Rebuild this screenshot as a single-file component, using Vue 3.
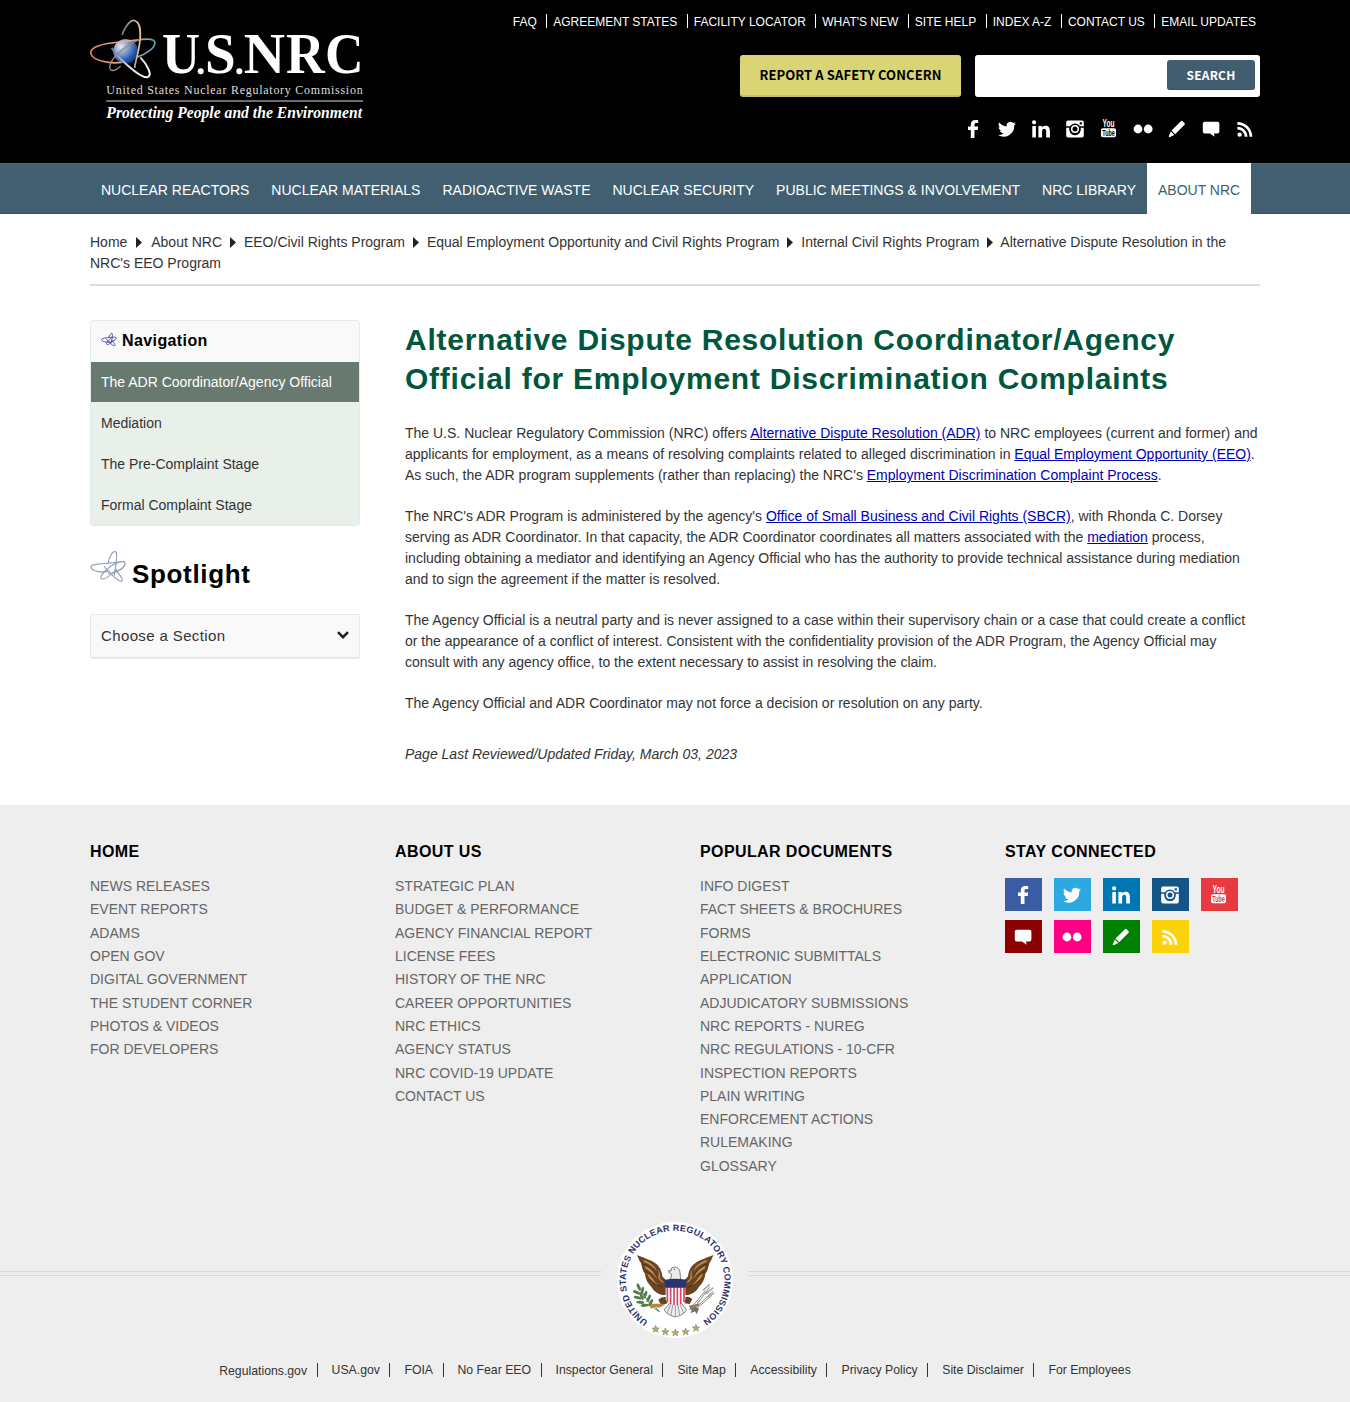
<script setup>
const topLinks = ['FAQ', 'AGREEMENT STATES', 'FACILITY LOCATOR', "WHAT'S NEW", 'SITE HELP', 'INDEX A-Z', 'CONTACT US', 'EMAIL UPDATES']
const mainNav = ['NUCLEAR REACTORS', 'NUCLEAR MATERIALS', 'RADIOACTIVE WASTE', 'NUCLEAR SECURITY', 'PUBLIC MEETINGS & INVOLVEMENT', 'NRC LIBRARY', 'ABOUT NRC']
const crumbs = ['Home', 'About NRC', 'EEO/Civil Rights Program', 'Equal Employment Opportunity and Civil Rights Program', 'Internal Civil Rights Program', "Alternative Dispute Resolution in the NRC's EEO Program"]
const sideLinks = ['The ADR Coordinator/Agency Official', 'Mediation', 'The Pre-Complaint Stage', 'Formal Complaint Stage']
const footerColumns = [
  { title: 'HOME', links: ['NEWS RELEASES', 'EVENT REPORTS', 'ADAMS', 'OPEN GOV', 'DIGITAL GOVERNMENT', 'THE STUDENT CORNER', 'PHOTOS & VIDEOS', 'FOR DEVELOPERS'] },
  { title: 'ABOUT US', links: ['STRATEGIC PLAN', 'BUDGET & PERFORMANCE', 'AGENCY FINANCIAL REPORT', 'LICENSE FEES', 'HISTORY OF THE NRC', 'CAREER OPPORTUNITIES', 'NRC ETHICS', 'AGENCY STATUS', 'NRC COVID-19 UPDATE', 'CONTACT US'] },
  { title: 'POPULAR DOCUMENTS', links: ['INFO DIGEST', 'FACT SHEETS & BROCHURES', 'FORMS', 'ELECTRONIC SUBMITTALS APPLICATION', 'ADJUDICATORY SUBMISSIONS', 'NRC REPORTS - NUREG', 'NRC REGULATIONS - 10-CFR', 'INSPECTION REPORTS', 'PLAIN WRITING', 'ENFORCEMENT ACTIONS', 'RULEMAKING', 'GLOSSARY'] },
]
const bottomLinks = ['Regulations.gov', 'USA.gov', 'FOIA', 'No Fear EEO', 'Inspector General', 'Site Map', 'Accessibility', 'Privacy Policy', 'Site Disclaimer', 'For Employees']

// Glyphs share a 20 x 20 box.
const icons = {
  facebook: 'M15.2 1h-2.7C9.4 1 7.8 2.7 7.8 5.5v2H5v3.4h2.8V19h3.7v-8.1h3.2l.5-3.4h-3.700V5.700c0-1.100.5-1.600 1.600-1.600h2.100z',
  twitter: 'M19 4.600c-.6.3-1.300.5-2.100.600.8-.500 1.300-1.200 1.600-2-.700.400-1.500.700-2.300.900a3.700 3.700 0 0 0-6.400 3.400C6.700 7.300 4 5.900 2.100 3.600c-1 1.700-.5 3.800 1.200 4.900-.6 0-1.200-.2-1.700-.5 0 1.800 1.200 3.300 3 3.700-.5.1-1.100.2-1.700.1.5 1.500 1.800 2.500 3.500 2.600A7.500 7.500 0 0 1 1 15.900a10.500 10.500 0 0 0 16.200-9.400c.7-.5 1.300-1.100 1.800-1.900z',
  linkedin: 'M1.300 7h3.600v11.500H1.300zM3.100 1.200a2.100 2.100 0 1 1 0 4.200 2.100 2.100 0 0 1 0-4.200zM7.400 7h3.500v1.600c.7-1.200 1.900-1.900 3.600-1.900 3.200 0 4.400 2 4.400 5.300v6.500h-3.700v-6c0-1.700-.5-2.700-1.900-2.700-1.500 0-2.200 1.100-2.200 2.800v5.900H7.400z',
  instagram: 'M3 1.500h14A1.800 1.800 0 0 1 18.800 3.300V7.300H14.800A5.600 5.600 0 0 0 5.200 7.300H1.200V3.300A1.800 1.800 0 0 1 3 1.500zM14.700 3.200v2.200h2.200V3.200zM1.200 8.800h3.100a5.900 5.900 0 1 0 11.400 0h3.100v8a1.800 1.800 0 0 1-1.800 1.800H3a1.800 1.800 0 0 1-1.800-1.800zM10 6.100a4 4 0 1 1 0 8 4 4 0 0 1 0-8zM10 7.600a2.500 2.500 0 1 0 0 5 2.500 2.500 0 0 0 0-5z',
  flickr: 'M5 5.600a4.400 4.400 0 1 1 0 8.800 4.400 4.400 0 0 1 0-8.800zM15.200 5.600a4.400 4.400 0 1 1 0 8.800 4.400 4.400 0 0 1 0-8.800z',
  pencil: 'M13.900 2.200q.8-.8 1.600 0l2 1.900q.8.8 0 1.600L8.200 15.200 4.500 11.600zM3.800 12.500l3.500 3.400L2.500 18.200l-.8-.8z',
  comment: 'M3.800 2.800h12.600q2 0 2 2v7.600q0 2-2 2h-3.400l.6 3.300-4.600-3.300H3.800q-2 0-2-2V4.800q0-2 2-2z',
  rss: 'M4.600 13.400a2.200 2.200 0 1 1 0 4.400 2.200 2.200 0 0 1 0-4.400zM2.400 7.800c5.600 0 10.100 4.400 10.100 10H9.700c0-4-3.300-7.200-7.300-7.200zM2.400 3c8.200 0 14.900 6.600 14.900 14.800h-2.700C14.600 11.100 9.200 5.800 2.400 5.800z',
}
const headerSocial = ['facebook', 'twitter', 'linkedin', 'instagram', 'youtube', 'flickr', 'pencil', 'comment', 'rss']
const footerSocial = ['facebook', 'twitter', 'linkedin', 'instagram', 'youtube', 'comment', 'flickr', 'pencil', 'rss']
const stars = [[289, 356], [318, 364], [348, 367], [379, 364], [410, 353]]
const leaves = [[238, 230, 70], [232, 246, 25], [235, 262, 15], [243, 276, 5], [256, 285, -5], [249, 241, 105], [258, 253, 110], [268, 264, 115], [274, 277, 120], [247, 258, 70]]
</script>

<template>
  <div class="page">
    <header class="masthead">
      <div class="wrap masthead-row">
        <svg class="logo" viewBox="30 21 840 330" aria-label="U.S. NRC">
          <defs>
            <radialGradient id="globe" cx=".3" cy=".3" r=".8">
              <stop offset="0" stop-color="#e4e9f4" /><stop offset=".4" stop-color="#7f9dd0" /><stop offset=".75" stop-color="#2458a8" /><stop offset="1" stop-color="#0b3478" />
            </radialGradient>
            <linearGradient id="orbitA" x1="0" x2="1"><stop offset="0" stop-color="#e07d60" /><stop offset=".55" stop-color="#f0b095" /><stop offset="1" stop-color="#4fa3b8" /></linearGradient>
            <linearGradient id="orbitB" x1="0" x2="1" y1="0" y2="1"><stop offset="0" stop-color="#5a7199" /><stop offset=".55" stop-color="#ddd" /><stop offset="1" stop-color="#fff" /></linearGradient>
            <linearGradient id="orbitC" x1="0" x2="1"><stop offset="0" stop-color="#6d7891" /><stop offset="1" stop-color="#f2c38c" /></linearGradient>
          </defs>
          <circle cx="137" cy="124" r="37" fill="url(#globe)" />
          <g fill="none" stroke-width="5">
            <path d="M125 157C88 162 40 152 33 132S68 100 120 96 219 79 224 96 196 133 172 141" stroke="url(#orbitA)" />
            <path d="M126 75C137 45 153 28 165 32 184 39 183 80 176 117S165 157 164 174" stroke="url(#orbitC)" />
            <path d="M180 88C145 101 99 137 91 162 83 188 104 186 122 168" stroke="#a78473" stroke-width="4" />
            <path d="M95 113C109 139 176 202 201 202 220 199 203 165 181 142" stroke="url(#orbitB)" stroke-width="6" />
          </g>
          <g class="logo-name">
            <text x="246" y="190" textLength="114" lengthAdjust="spacingAndGlyphs">U</text>
            <circle cx="362" cy="184" r="9" />
            <text x="375" y="190" textLength="92" lengthAdjust="spacingAndGlyphs">S</text>
            <circle cx="478" cy="184" r="9" />
            <text x="491" y="190" textLength="124" lengthAdjust="spacingAndGlyphs">N</text>
            <text x="618" y="190" textLength="116" lengthAdjust="spacingAndGlyphs">R</text>
            <text x="735" y="190" textLength="116" lengthAdjust="spacingAndGlyphs">C</text>
          </g>
          <text class="logo-agency" x="79" y="251" textLength="769">United States Nuclear Regulatory Commission</text>
          <path d="M79 273H849" stroke="#ddd" stroke-width="3" />
          <text class="logo-motto" x="79" y="325" textLength="767" lengthAdjust="spacingAndGlyphs">Protecting People and the Environment</text>
        </svg>
        <div class="tools">
          <ul class="top-links"><li v-for="l in topLinks" :key="l">{{ l }}</li></ul>
          <div class="actions">
            <a class="report">REPORT A SAFETY CONCERN</a>
            <div class="search"><button>SEARCH</button></div>
          </div>
          <ul class="social">
            <li v-for="s in headerSocial" :key="s">
              <svg viewBox="0 0 20 20" class="glyph">
                <template v-if="s === 'youtube'">
                  <text x="9.500" y="8.300" class="yt" textLength="12" lengthAdjust="spacingAndGlyphs">You</text>
                  <rect x="2" y="9.300" width="15" height="9" rx="1.800" />
                  <text x="9.500" y="17.100" class="yt tube" textLength="12.500" lengthAdjust="spacingAndGlyphs">Tube</text>
                </template>
                <path v-else :d="icons[s]" fill-rule="evenodd" />
              </svg>
            </li>
          </ul>
        </div>
      </div>
    </header>

    <nav class="main-nav">
      <ul class="wrap"><li v-for="(l, i) in mainNav" :key="l" :class="{ current: i === 6 }">{{ l }}</li></ul>
    </nav>

    <div class="wrap">
      <div class="crumbs"><template v-for="(c, i) in crumbs" :key="c"><svg v-if="i" class="arrow" :class="'arrow-' + i" viewBox="0 0 5 9"><path d="M0 0L5 4.500L0 9z" /></svg>{{ c + ' ' }}</template></div>

      <div class="columns">
        <aside>
          <div class="side-nav">
            <h2>
              <svg class="atom small" viewBox="0 0 37 34"><g fill="none" stroke="#514ba0" stroke-width="2.200"><path d="M18 23C9 24 1 20 1 17S13 13 22 12 36 11 35 15 24 25 15 22" /><path d="M18 13C20 5 25 0 26 4S26 16 23 26" /><path d="M26 12C18 18 11 25 13 28S22 26 29 18" /><path d="M12 15C18 23 30 35 32 31S28 23 24 19" /></g></svg>
              Navigation
            </h2>
            <ul><li v-for="(l, i) in sideLinks" :key="l" :class="{ current: i === 0 }">{{ l }}</li></ul>
          </div>
          <h2 class="spotlight">
            <svg class="atom" viewBox="0 0 37 34"><g fill="none" stroke="#8d9ab5" stroke-width="1.100"><path d="M20 21C10 24 1 20 1 17S10 14 20 13 36 10 35 14 28 22 18 24" /><path d="M18 14C19 5 24 0 26 2S26 15 24 26" /><path d="M29 12C20 15 10 25 11 28S20 27 27 19" /><path d="M14 16C20 25 31 33 32 31S29 23 25 20" /></g></svg>
            <span>Spotlight</span>
          </h2>
          <div class="select">
            <span>Choose a Section</span>
            <svg viewBox="0 0 12 8"><path d="M1 1.200L6 6.200L11 1.200" fill="none" stroke="#222" stroke-width="2.600" /></svg>
          </div>
        </aside>

        <main>
          <h1>Alternative Dispute Resolution Coordinator/Agency Official for Employment Discrimination Complaints</h1>
          <p>The U.S. Nuclear Regulatory Commission (NRC) offers <a href="#">Alternative Dispute Resolution (ADR)</a> to NRC employees (current and former) and applicants for employment, as a means of resolving complaints related to alleged discrimination in <a href="#">Equal Employment Opportunity (EEO)</a>. As such, the ADR program supplements (rather than replacing) the NRC's <a href="#">Employment Discrimination Complaint Process</a>.</p>
          <p>The NRC's ADR Program is administered by the agency's <a href="#">Office of Small Business and Civil Rights (SBCR)</a>, with Rhonda C. Dorsey serving as ADR Coordinator. In that capacity, the ADR Coordinator coordinates all matters associated with the <a href="#">mediation</a> process, including obtaining a mediator and identifying an Agency Official who has the authority to provide technical assistance during mediation and to sign the agreement if the matter is resolved.</p>
          <p>The Agency Official is a neutral party and is never assigned to a case within their supervisory chain or a case that could create a conflict or the appearance of a conflict of interest. Consistent with the confidentiality provision of the ADR Program, the Agency Official may consult with any agency office, to the extent necessary to assist in resolving the claim.</p>
          <p>The Agency Official and ADR Coordinator may not force a decision or resolution on any party.</p>
          <p class="updated">Page Last Reviewed/Updated Friday, March 03, 2023</p>
        </main>
      </div>
    </div>

    <footer>
      <div class="wrap footer-columns">
        <section v-for="c in footerColumns" :key="c.title">
          <h3>{{ c.title }}</h3>
          <ul><li v-for="l in c.links" :key="l">{{ l }}</li></ul>
        </section>
        <section>
          <h3>STAY CONNECTED</h3>
          <ul class="tiles">
            <li v-for="s in footerSocial" :key="s" :class="s">
              <svg viewBox="0 0 20 20" class="glyph">
                <template v-if="s === 'youtube'">
                  <text x="9.500" y="8.300" class="yt" textLength="12" lengthAdjust="spacingAndGlyphs">You</text>
                  <rect x="2" y="9.300" width="15" height="9" rx="1.800" />
                  <text x="9.500" y="17.100" class="yt tube" textLength="12.500" lengthAdjust="spacingAndGlyphs">Tube</text>
                </template>
                <path v-else :d="icons[s]" fill-rule="evenodd" />
              </svg>
            </li>
          </ul>
        </section>
      </div>

      <div class="seal-row">
        <i class="rule"></i>
        <svg class="seal" viewBox="152 29 390 360">
          <defs>
            <path id="ring" d="M266 333A148 148 0 1 1 430 332" />
            <g id="wing">
              <path fill="#6b4425" d="M233 134C246 140 268 146 286 157 302 168 307 182 309 198 314 206 321 209 327 214L323 253C305 257 285 247 276 229 263 217 258 202 257 190 249 181 247 167 245 158 239 151 236 142 233 134z" />
              <path fill="#bd8b4a" d="M252 148C271 155 289 165 293 184 286 172 271 162 254 155zM257 166C276 174 287 187 294 206 284 193 273 183 259 175zM264 188C278 197 287 211 298 227 284 218 272 208 266 196zM297 175Q303 190 302 204L315 219Q304 216 297 204 299 190 297 175z" />
              <path fill="none" stroke="#3b2410" stroke-width="2" d="M248 160Q276 168 292 198M258 181Q277 193 291 218M267 205Q284 223 310 231" />
            </g>
          </defs>
          <circle cx="347" cy="209" r="174" fill="#fff" />
          <text class="seal-text"><textPath href="#ring" textLength="755" lengthAdjust="spacing">UNITED STATES NUCLEAR REGULATORY COMMISSION</textPath></text>
          <use href="#wing" />
          <use href="#wing" transform="matrix(-1 0 0 1 695 0)" />
          <path d="M332 277L314 299 324 310 336 316 348 320 361 316 372 310 382 299 365 277z" fill="#eee" stroke="#555" stroke-width="2" />
          <path d="M335 280L323 309M341 280L335 315M348 280V319M355 280L361 315M362 280L373 309" stroke="#777" stroke-width="2" />
          <path d="M297 268Q305 258 320 260L324 278Q312 286 303 280zM377 261Q390 256 399 267L391 281 376 279z" fill="#654321" />
          <path d="M332 213L337 192Q328 188 328 181L336 180Q334 171 346 170 361 171 362 187L364 213z" fill="#eee" stroke="#777" stroke-width="3" />
          <path d="M328 180q-4 3-2 8l5-4 7-1" fill="#b8a06a" /><circle cx="345" cy="177" r="2" fill="#333" />
          <path d="M319 229H378V267Q375 280 348 285 322 280 319 267z" fill="#fff" />
          <path d="M324 230V275M334 230V281M344 230V284M354 230V284M364 230V281M374 230V275" stroke="#d4456a" stroke-width="5" />
          <path d="M315 209Q348 202 382 209L379 232H318z" fill="#29336e" />
          <path d="M239 227Q253 259 280 289L298 304" fill="none" stroke="#5c7449" stroke-width="3" />
          <ellipse v-for="(l, i) in leaves" :key="i" rx="12" ry="4.500" fill="#557d50" :transform="`translate(${l[0]} ${l[1]}) rotate(${l[2]})`" />
          <path d="M271 287l8-7h30l6 5-16 7-15-2-9 5z" fill="#bd823d" />
          <path d="M289 292l12 12" stroke="#5878a5" stroke-width="3" />
          <path d="M396 304L451 230M398 303L461 243M402 303L457 256M390 299L438 241" stroke="#8b8983" stroke-width="3" />
          <path d="M431 240l20-18M437 252l25-20M442 261l23-13" stroke="#aaa" stroke-width="5" />
          <path d="M391 293l18-3 10 5-7 17-5-9-14 6 5-9z" fill="#66727a" /><path d="M388 286l34-7-5 8-24 7z" fill="#a47945" />
          <path v-for="(s, i) in stars" :key="'s' + i" d="M0-11L3-3 11-3 5 2 7 10 0 5-7 10-5 2-11-3-3-3z" fill="#b3ac78" stroke="#77764b" stroke-width="1.500" :transform="`translate(${s[0]} ${s[1]})`" />
        </svg>
        <i class="rule"></i>
      </div>
      <ul class="bottom-links"><li v-for="l in bottomLinks" :key="l">{{ l }}</li></ul>
    </footer>
  </div>
</template>

<style>
body { margin: 0; background: #fff; }
</style>

<style scoped>
.page { font: 14px/21px "Liberation Sans", Arial, sans-serif; color: #333; }
.page * { box-sizing: border-box; }
ul { list-style: none; margin: 0; padding: 0; }
h1, h2, h3, p { margin: 0; }
.wrap { width: 1170px; margin: 0 auto; }
.masthead { height: 163px; background: #000; color: #fff; }
.masthead-row { display: flex; justify-content: space-between; }
.logo { width: 280px; height: 110px; margin-top: 17px; }
.logo-name { fill: #fff; font: bold 168px "Liberation Serif", serif; }
.logo-agency { fill: #ddd; font: 36px "Liberation Serif", serif; }
.logo-motto { fill: #fff; font: italic bold 49px "Liberation Serif", serif; }
.tools { display: flex; flex-direction: column; align-items: flex-end; }
.top-links { display: flex; height: 55px; padding: 14px 4px 0 0; font-size: 12px; line-height: 16px; }
.top-links li + li { position: relative; margin-left: 16.500px; }
.top-links li + li::before { content: ""; position: absolute; left: -7px; top: 0; width: 1px; height: 14px; background: #fff; }
.actions { display: flex; gap: 14px; }
.report { width: 221px; height: 42px; border-radius: 3px; background: #d9d474; border-bottom: 2px solid #c9c161; color: #000; font: bold 13px/40px "Noto Sans CJK JP", sans-serif; letter-spacing: .1px; text-align: center; white-space: nowrap; }
.search { width: 285px; height: 42px; padding: 5px; border-radius: 3px; background: #fff; text-align: right; display: flex; justify-content: flex-end; }
.search button { width: 88px; height: 30px; padding: 0; border: 0; border-bottom: 1px solid #35505f; border-radius: 3px; background: #415e70; color: #fff; font: bold 12px/28px "Noto Sans CJK JP", sans-serif; letter-spacing: .2px; }
.social { display: flex; margin: 22px -2px 0 0; }
.social li { width: 34px; height: 20px; display: flex; justify-content: center; --under: #000; }
.glyph { width: 20px; height: 20px; fill: #fff; overflow: visible; }
.yt { font: bold 11px "Liberation Sans Narrow", "Liberation Sans", sans-serif; text-anchor: middle; }
.tube { fill: var(--under); font-size: 9.500px; }
.main-nav { height: 51px; background: #415f70; border-top: 1px solid #4b6878; border-bottom: 1px solid #355566; }
.main-nav ul { display: flex; }
.main-nav li { height: 51px; margin-top: -1px; padding: 0 11px; line-height: 54px; color: #fff; white-space: nowrap; }
.main-nav .current { background: #fff; color: #415f70; }
.crumbs { height: 72px; padding-top: 18px; border-bottom: 2px solid #ddd; }
.arrow { width: 6px; height: 11px; margin: 0 8px 0 4px; fill: #222; vertical-align: -1px; }
.arrow-1 { margin-left: 5px; margin-right: 9px; }
.arrow-5 { margin-right: 7px; }
.columns { display: flex; gap: 45px; height: 519px; padding-top: 34px; }
aside { width: 270px; }
main { width: 855px; }
.side-nav { height: 206px; border: 1px solid #e6eae8; border-radius: 3px; overflow: hidden; background: #f9f9f9; }
.side-nav h2 { display: flex; align-items: center; height: 41px; padding: 0 10px 2px; gap: 5px; color: #000; font-size: 16px; letter-spacing: .4px; }
.atom { width: 37px; height: 34px; }
.atom.small { width: 16px; height: 15px; margin-top: -2px; }
.side-nav li { height: 41px; padding-left: 10px; line-height: 41px; background: #e9f0ea; border-bottom: 1px solid #ebf2ec; }
.side-nav .current { background: #68796f; color: #fff; }
.spotlight { display: flex; height: 88px; padding-top: 24px; gap: 5px; color: #000; font-size: 26px; line-height: 48px; letter-spacing: .67px; }
.select { display: flex; justify-content: space-between; align-items: center; height: 45px; padding: 0 10px 1px; border: 1px solid #e8e8e8; border-bottom-width: 2px; border-radius: 2px; background: #f9f9f9; font-size: 15px; letter-spacing: .375px; }
.select svg { width: 12px; height: 8px; margin-top: -2px; }
h1 { margin-bottom: 25px; color: #00573d; font-size: 30px; line-height: 39px; letter-spacing: .75px; }
p { margin-bottom: 20px; }
p a { color: #0000b4; }
.updated { margin-top: 30px; font-style: italic; }
footer { height: 597px; background: #eee; }
.footer-columns { display: grid; grid-template-columns: repeat(4, 305px); height: 415px; padding-top: 36px; }
h3 { color: #000; font-size: 16px; line-height: 21px; letter-spacing: .4px; margin-bottom: 13px; }
.footer-columns li { width: 220px; color: #666; line-height: 23.310px; }
.footer-columns .tiles { display: flex; flex-wrap: wrap; gap: 9px 12px; width: 240px; margin-top: 16px; }
.footer-columns .tiles li { width: 37px; height: 33px; padding-right: 1px; display: flex; align-items: center; justify-content: center; background: var(--under); }
.facebook { --under: #3b5ba5; }
.twitter { --under: #2ea8e0; }
.linkedin { --under: #0077b5; }
.instagram { --under: #125688; }
.tiles .youtube { --under: #e63a40; }
.comment { --under: #8b0000; }
.flickr { --under: #ff0084; }
.pencil { --under: #008000; }
.rss { --under: #fcd20a; }
.seal-row { display: flex; justify-content: space-between; height: 120px; }
.rule { width: 601px; height: 5px; margin-top: 51px; border: solid #d6d6d6; border-width: 1px 0; }
.seal { width: 130px; height: 120px; }
.seal-text { fill: #303069; font: bold 27px "Liberation Sans", sans-serif; }
.bottom-links { display: flex; justify-content: center; padding-top: 20px; font-size: 12.250px; line-height: 20px; }
.bottom-links li:first-child { padding-top: 1px; }
.bottom-links li + li { position: relative; margin-left: 24.500px; }
.bottom-links li + li::before { content: ""; position: absolute; left: -15px; top: 3px; width: 1px; height: 14px; background: #333; }
</style>
